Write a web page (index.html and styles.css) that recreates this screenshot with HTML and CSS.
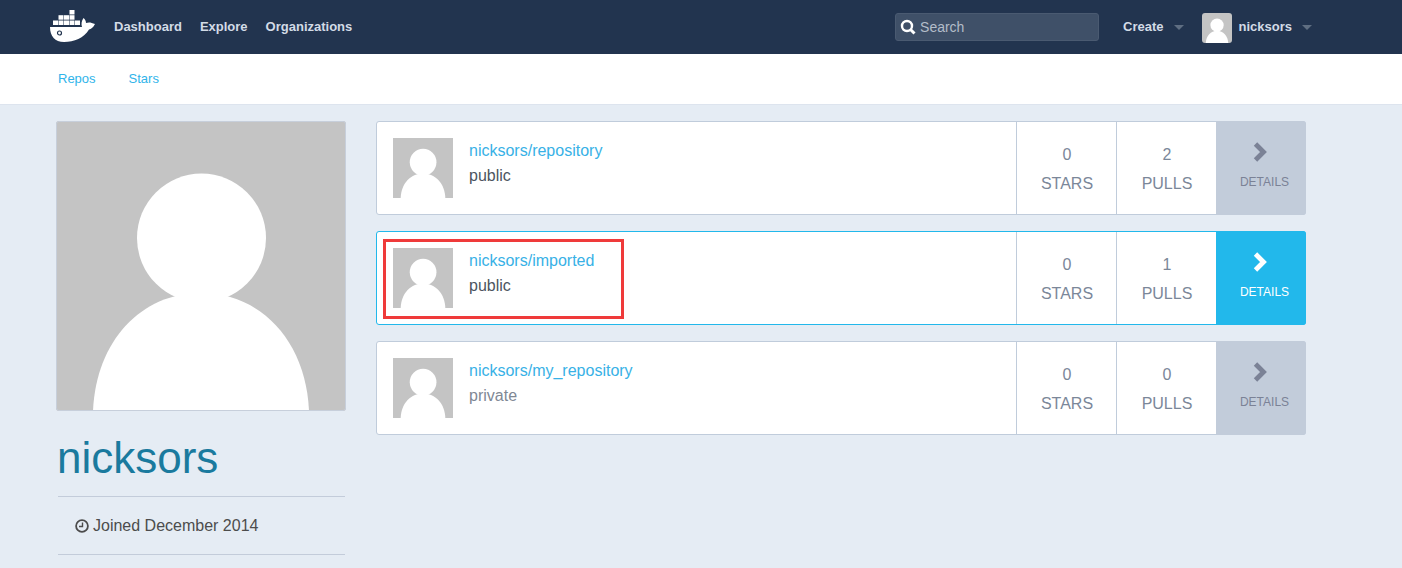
FILE: index.html
```html
<!DOCTYPE html>
<html lang="en">
<head>
    <meta charset="UTF-8">
    <title>nicksors</title>
    <link rel="stylesheet" href="styles.css">
</head>
<body>
<svg class="defs" width="0" height="0">
    <symbol id="person" viewBox="0 0 290 290">
        <rect width="290" height="290" fill="#c4c4c4"/>
        <circle cx="145.500" cy="117" r="64.500" fill="#fff"/>
        <path d="M37 290C40 220 85 172 145 172S250 220 253 290Z" fill="#fff"/>
    </symbol>
    <symbol id="chevron" viewBox="0 0 14 20">
        <path d="M2.500 2L10.500 10L2.500 18" fill="none" stroke="currentColor" stroke-width="4.800"/>
    </symbol>
</svg>

<div class="topbar">
    <svg class="logo" width="46" height="33" viewBox="0 0 46 33">
        <g fill="#fff">
            <rect x="19.500" y="0" width="5" height="4.500"/>
            <rect x="8.500" y="5.200" width="5" height="4.500"/>
            <rect x="14" y="5.200" width="5" height="4.500"/>
            <rect x="19.500" y="5.200" width="5" height="4.500"/>
            <rect x="3" y="10.500" width="5" height="4.500"/>
            <rect x="8.500" y="10.500" width="5" height="4.500"/>
            <rect x="14" y="10.500" width="5" height="4.500"/>
            <rect x="19.500" y="10.500" width="5" height="4.500"/>
            <rect x="25" y="10.500" width="5" height="4.500"/>
            <path d="M0 17H32C31 14 31.500 11 33.500 8C35 9.200 36 11 36 13C38.500 12 41 12.200 45 14C43 18 41 19 39 19.500C34 28 24 32 14 32C5 32 0 26 0 17Z"/>
        </g>
        <circle cx="9.500" cy="23" r="2" fill="none" stroke="#22344f" stroke-width="1.200"/>
    </svg>
    <a class="nav-link" href="#">Dashboard</a>
    <a class="nav-link" href="#">Explore</a>
    <a class="nav-link" href="#">Organizations</a>

    <div class="search">
        <svg width="16" height="16" viewBox="0 0 16 16">
            <circle cx="7" cy="7" r="5" fill="none" stroke="#fff" stroke-width="2.400"/>
            <path d="M10.500 10.500L14.500 14.500" stroke="#fff" stroke-width="3"/>
        </svg>
        <span>Search</span>
    </div>
    <a class="nav-link create" href="#">Create</a>
    <span class="caret"></span>
    <svg class="user-pic" width="30" height="30"><use href="#person"/></svg>
    <a class="nav-link username" href="#">nicksors</a>
    <span class="caret end"></span>
</div>

<div class="subnav">
    <a href="#">Repos</a>
    <a href="#">Stars</a>
</div>

<div class="page">
    <div class="side">
        <svg class="side-pic" width="290" height="290"><use href="#person"/></svg>
        <h1>nicksors</h1>
        <div class="joined">
            <svg width="14" height="14" viewBox="0 0 14 14">
                <circle cx="7" cy="7" r="5.900" fill="none" stroke="#4c4c4c" stroke-width="1.800"/>
                <path d="M7.500 3.500V7.500H4" fill="none" stroke="#4c4c4c" stroke-width="1.400"/>
            </svg>
            Joined December 2014
        </div>
    </div>

    <div class="repos">
        <div class="repo">
            <div class="repo-main">
                <svg width="60" height="60"><use href="#person"/></svg>
                <div class="repo-text">
                    <a href="#">nicksors/repository</a>
                    <span class="public">public</span>
                </div>
            </div>
            <div class="stat"><span>0</span><span>STARS</span></div>
            <div class="stat"><span>2</span><span>PULLS</span></div>
            <a class="details" href="#">
                <svg width="14" height="20"><use href="#chevron"/></svg>
                <span>DETAILS</span>
            </a>
        </div>

        <div class="repo active">
            <div class="repo-main">
                <svg width="60" height="60"><use href="#person"/></svg>
                <div class="repo-text">
                    <a href="#">nicksors/imported</a>
                    <span class="public">public</span>
                </div>
            </div>
            <div class="stat"><span>0</span><span>STARS</span></div>
            <div class="stat"><span>1</span><span>PULLS</span></div>
            <a class="details" href="#">
                <svg width="14" height="20"><use href="#chevron"/></svg>
                <span>DETAILS</span>
            </a>
            <div class="mark"></div>
        </div>

        <div class="repo">
            <div class="repo-main">
                <svg width="60" height="60"><use href="#person"/></svg>
                <div class="repo-text">
                    <a href="#">nicksors/my_repository</a>
                    <span class="private">private</span>
                </div>
            </div>
            <div class="stat"><span>0</span><span>STARS</span></div>
            <div class="stat"><span>0</span><span>PULLS</span></div>
            <a class="details" href="#">
                <svg width="14" height="20"><use href="#chevron"/></svg>
                <span>DETAILS</span>
            </a>
        </div>
    </div>
</div>
</body>
</html>
```

FILE: styles.css
```css
*{
    margin: 0;
    padding: 0;
    box-sizing: border-box;
}
html, body{
    height: 568px;
    overflow: hidden;
}
body{
    background-color: #e5ecf4;
    font-family: "Liberation Sans", Arial, sans-serif;
    color: #4c4c4c;
}
a{
    text-decoration: none;
}
svg{
    display: block;
    flex-shrink: 0;
}
.defs{
    position: absolute;
}

/* top bar */
.topbar{
    display: flex;
    align-items: center;
    height: 54px;
    padding: 0 90px 0 50px;
    background-color: #22344f;
}
.logo{
    margin: -2px 18px 0 0;
}
.nav-link{
    margin: -2px 18px 0 0;
    font-size: 13px;
    font-weight: bold;
    color: #d3dbe6;
}
.search{
    display: flex;
    align-items: center;
    gap: 4px;
    width: 204px;
    height: 28px;
    margin-left: auto;
    margin-right: 24px;
    padding-left: 4px;
    background-color: #3f5068;
    border: 1px solid #4a5a71;
    border-radius: 3px;
    font-size: 14px;
    color: #b3bdc9;
}
.create{
    margin-right: 10px;
}
.username{
    margin: -2px 10px 0 7px;
}
.caret{
    width: 0;
    height: 0;
    margin-right: 18px;
    border-top: 5px solid #5f6e82;
    border-left: 5px solid transparent;
    border-right: 5px solid transparent;
}
.caret.end{
    margin-right: 0;
}
.user-pic{
    border-radius: 3px;
    margin-top: 2px;
}

/* sub nav */
.subnav{
    display: flex;
    align-items: center;
    gap: 33px;
    height: 51px;
    padding: 0 0 2px 58px;
    background-color: #fff;
    border-bottom: 1px solid #dde4ee;
    font-size: 13px;
}
.subnav a{
    color: #30b4ea;
}

/* page */
.page{
    display: flex;
    gap: 30px;
    padding: 16px 96px 0 56px;
}
.side{
    width: 290px;
}
.side-pic{
    border-radius: 3px;
    outline: 1px solid #c7cfdb;
    outline-offset: -1px;
}
h1{
    margin: 20px 0 0 1px;
    font-size: 44px;
    font-weight: normal;
    line-height: 54px;
    color: #1a7a9e;
}
.joined{
    display: flex;
    align-items: center;
    gap: 4px;
    height: 59px;
    margin: 11px 1px 0 2px;
    padding-left: 17px;
    border-top: 1px solid #c3ccda;
    border-bottom: 1px solid #c3ccda;
    font-size: 16px;
}

/* repo list */
.repos{
    display: flex;
    flex-direction: column;
    gap: 16px;
    width: 930px;
}
.repo{
    display: flex;
    position: relative;
    height: 94px;
    background-color: #fff;
    border: 1px solid #c0ccdb;
    border-radius: 3px;
}
.repo.active{
    border-color: #22b8eb;
}
.repo-main{
    display: flex;
    align-items: center;
    gap: 16px;
    flex: 1;
    padding-left: 16px;
}
.repo-text{
    display: flex;
    flex-direction: column;
    gap: 6px;
    padding-bottom: 10px;
    font-size: 16px;
    line-height: 19px;
}
.repo-text a{
    color: #38b1e6;
}
.public{
    color: #4c5560;
}
.private{
    color: #7f8894;
}
.stat{
    display: flex;
    flex-direction: column;
    align-items: center;
    gap: 10px;
    width: 100px;
    padding: 23px 0 0 1px;
    border-left: 1px solid #c0ccdb;
    font-size: 16px;
    line-height: 19px;
    color: #7b8799;
}
.details{
    display: flex;
    flex-direction: column;
    align-items: center;
    width: 90px;
    margin: -1px -1px -1px 0;
    padding: 21px 0 0 7px;
    background-color: #c2ccda;
    border-radius: 0 3px 3px 0;
    font-size: 12px;
    color: #7b8296;
}
.details svg{
    margin: 0 0 13px -9px;
}
.active .details{
    background-color: #22b8eb;
    color: #fff;
}
.mark{
    position: absolute;
    left: 6px;
    top: 7px;
    width: 241px;
    height: 80px;
    border: 3px solid #ef3a3a;
}
```
